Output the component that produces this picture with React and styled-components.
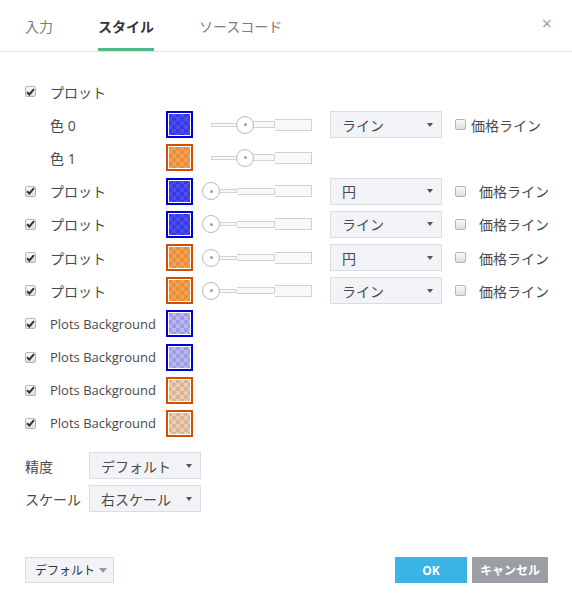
import React from 'react';
import styled, { createGlobalStyle } from 'styled-components';

const GlobalStyle = createGlobalStyle`
  body {
    margin: 0;
    background: #fff;
    font-family: "Open Sans", "Noto Sans CJK JP", sans-serif;
    color: #4a4a4a;
  }
`;

const Dialog = styled.div`
  width: 572px;
  height: 607px;
  display: flex;
  flex-direction: column;
  background: #fff;
`;

const Header = styled.div`
  height: 51px;
  display: flex;
  align-items: stretch;
  padding: 0 20px 0 25px;
  border-bottom: 1px solid #e0e3e8;
`;

const Tab = styled.div`
  display: flex;
  align-items: center;
  margin-right: 45px;
  font-size: 14px;
  color: ${p => (p.$active ? '#333' : '#7c7c7c')};
  font-weight: ${p => (p.$active ? 700 : 400)};
  border-bottom: 3px solid ${p => (p.$active ? '#53b987' : 'transparent')};
  padding-top: 3px;
`;

const Close = styled.div`
  margin-left: auto;
  display: flex;
  align-items: center;
  color: #9a9a9a;
  font-size: 18px;
  padding-bottom: 6px;
`;

const Body = styled.div`
  padding: 23px 25px 0;
  display: flex;
  flex-direction: column;
`;

const Row = styled.div`
  height: 33.2px;
  display: flex;
  align-items: center;
  white-space: nowrap;
  & > * {
    flex-shrink: 0;
  }
`;

const CheckCell = styled.div`
  width: 25px;
  display: flex;
  align-items: center;
`;

const Box = styled.div`
  width: 11px;
  height: 11px;
  box-sizing: border-box;
  flex-shrink: 0;
  border: 1px solid #b4b4b4;
  border-radius: 2px;
  background: linear-gradient(#fbfbfb, #dedede);
  display: flex;
  align-items: center;
  justify-content: center;
  margin-left: ${p => p.$ml || 0}px;
`;

const Label = styled.div`
  width: ${p => p.$w || 116}px;
  font-size: ${p => (p.$latin ? 13 : 14)}px;
  white-space: nowrap;
`;

const swatchColors = {
  blue: ['#0000d0', '#4b4bf5', '#3a3ae2'],
  orange: ['#d05000', '#f4a14e', '#e88f3f'],
  blueBg: ['#0000d0', '#b6b6f2', '#9d9de0'],
  orangeBg: ['#d05000', '#eacdb2', '#d9b595'],
};

const Swatch = styled.div`
  width: 27px;
  height: 27px;
  box-sizing: border-box;
  border: 2px solid ${p => swatchColors[p.$c][0]};
  box-shadow: inset 0 0 0 1px #fff;
  background: repeating-conic-gradient(
      ${p => swatchColors[p.$c][1]} 0 25%,
      ${p => swatchColors[p.$c][2]} 0 50%
    )
    0 0 / 8px 8px;
`;

const Slider = styled.div`
  position: relative;
  width: 110px;
  height: 20px;
  margin-left: 9px;
  display: flex;
  align-items: center;
`;

const Seg = styled.div`
  width: ${p => p.$w}px;
  height: ${p => p.$h}px;
  box-sizing: border-box;
  border: 1px solid #cfd2d8;
  border-left: ${p => (p.$first ? '1px solid #cfd2d8' : 'none')};
  background: #f8f8f8;
  margin-left: ${p => p.$ml || 0}px;
`;

const Handle = styled.div`
  position: absolute;
  top: 1px;
  width: 18px;
  height: 18px;
  box-sizing: border-box;
  border-radius: 50%;
  border: 1px solid #b5b9c2;
  background: #fff;
  display: flex;
  align-items: center;
  justify-content: center;
  &::after {
    content: '';
    width: 3px;
    height: 3px;
    border-radius: 50%;
    background: #9aa0aa;
  }
`;

const Select = styled.div`
  width: ${p => p.$w || 112}px;
  height: 27px;
  box-sizing: border-box;
  flex-shrink: 0;
  margin-left: ${p => p.$ml || 0}px;
  background: #f1f3f7;
  border: 1px solid #dadde4;
  display: flex;
  align-items: center;
  padding: 0 8px 0 11px;
  font-size: 14px;
  color: #4a4a4a;
  white-space: nowrap;
`;

const Caret = styled.span`
  margin-left: auto;
  width: 0;
  height: 0;
  border-left: 3.5px solid transparent;
  border-right: 3.5px solid transparent;
  border-top: 4px solid ${p => p.$color || '#555'};
`;

const PriceLabel = styled.span`
  font-size: 14px;
  margin-left: ${p => p.$gap}px;
`;

const Settings = styled.div`
  margin-top: 9px;
  display: flex;
  flex-direction: column;
`;

const Footer = styled.div`
  margin-top: auto;
  padding: 0 24px 24px 25px;
  display: flex;
  align-items: center;
`;

const Button = styled.div`
  height: 26px;
  width: ${p => p.$w}px;
  box-sizing: border-box;
  display: flex;
  align-items: center;
  justify-content: center;
  font-size: 12px;
  font-weight: 700;
  color: #fff;
  background: ${p => p.$bg};
  margin-left: ${p => p.$ml || 0}px;
  white-space: nowrap;
`;

const DefaultButton = styled.div`
  height: 26px;
  width: 89px;
  box-sizing: border-box;
  background: #f1f3f7;
  border: 1px solid #d7dbe2;
  display: flex;
  align-items: center;
  gap: 4px;
  padding: 0 0 0 9px;
  font-size: 12px;
  color: #333;
  white-space: nowrap;
  margin-right: auto;
`;

const DefaultCaret = styled.span`
  width: 0;
  height: 0;
  border-left: 4px solid transparent;
  border-right: 4px solid transparent;
  border-top: 5px solid #999;
`;

function Check({ checked = true, ml }) {
  return (
    <Box $ml={ml}>
      {checked && (
        <svg width="9" height="8" viewBox="0 0 9 8">
          <path d="M1 4.2 L3.4 6.5 L8 1.2" fill="none" stroke="#333" strokeWidth="2" />
        </svg>
      )}
    </Box>
  );
}

function SliderBar({ pos }) {
  return (
    <Slider>
      <Seg $first $ml={9} $w={26} $h={4} />
      <Seg $w={38} $h={7} />
      <Seg $w={37} $h={12} />
      <Handle style={{ left: pos }} />
    </Slider>
  );
}

function Dropdown({ value, w, ml }) {
  return (
    <Select $w={w} $ml={ml}>
      {value}
      <Caret />
    </Select>
  );
}

function PriceLine({ gap }) {
  return (
    <>
      <Check checked={false} ml={13} />
      <PriceLabel $gap={gap}>価格ライン</PriceLabel>
    </>
  );
}

const plots = [
  { c: 'blue', type: '円' },
  { c: 'blue', type: 'ライン' },
  { c: 'orange', type: '円' },
  { c: 'orange', type: 'ライン' },
];

const backgrounds = ['blueBg', 'blueBg', 'orangeBg', 'orangeBg'];

export default function App() {
  return (
    <>
      <GlobalStyle />
      <Dialog>
        <Header>
          <Tab>入力</Tab>
          <Tab $active>スタイル</Tab>
          <Tab>ソースコード</Tab>
          <Close>×</Close>
        </Header>
        <Body>
          <Row>
            <CheckCell><Check /></CheckCell>
            <Label>プロット</Label>
          </Row>
          <Row>
            <CheckCell />
            <Label>色 0</Label>
            <Swatch $c="blue" />
            <SliderBar pos={34} />
            <Dropdown value="ライン" ml={18} />
            <PriceLine gap={5} />
          </Row>
          <Row>
            <CheckCell />
            <Label>色 1</Label>
            <Swatch $c="orange" />
            <SliderBar pos={34} />
          </Row>
          {plots.map((p, i) => (
            <Row key={i}>
              <CheckCell><Check /></CheckCell>
              <Label>プロット</Label>
              <Swatch $c={p.c} />
              <SliderBar pos={0} />
              <Dropdown value={p.type} ml={18} />
              <PriceLine gap={13} />
            </Row>
          ))}
          {backgrounds.map((c, i) => (
            <Row key={i}>
              <CheckCell><Check /></CheckCell>
              <Label $latin>Plots Background</Label>
              <Swatch $c={c} />
            </Row>
          ))}
          <Settings>
            <Row>
              <Label $w={64}>精度</Label>
              <Dropdown value="デフォルト" />
            </Row>
            <Row>
              <Label $w={64}>スケール</Label>
              <Dropdown value="右スケール" />
            </Row>
          </Settings>
        </Body>
        <Footer>
          <DefaultButton>
            デフォルト
            <DefaultCaret />
          </DefaultButton>
          <Button $w={72} $bg="#3bb4e5">OK</Button>
          <Button $w={76} $bg="#9b9ea4" $ml={5}>キャンセル</Button>
        </Footer>
      </Dialog>
    </>
  );
}
